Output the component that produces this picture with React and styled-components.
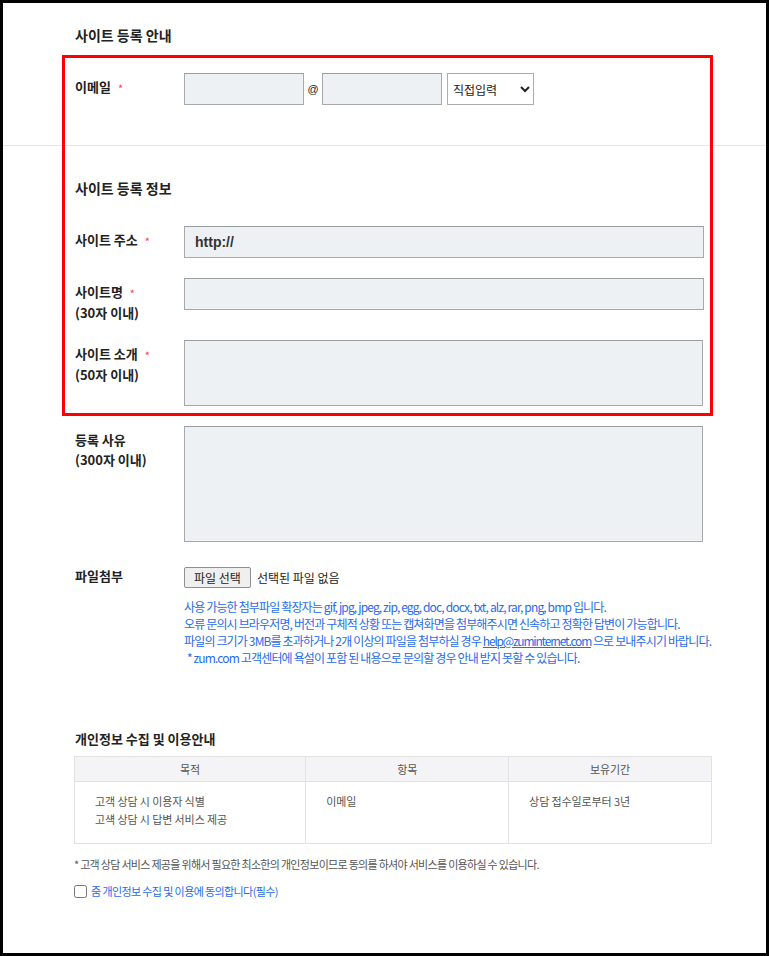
import styled, { createGlobalStyle } from "styled-components";

const GlobalStyle = createGlobalStyle`
  html, body {
    margin: 0;
    padding: 0;
    background: #fff;
  }
  body {
    font-family: "Noto Sans CJK KR", "Noto Sans", sans-serif;
    color: #222;
  }
  * {
    box-sizing: border-box;
  }
`;

const notes = [
    "사용 가능한 첨부파일 확장자는 gif, jpg, jpeg, zip, egg, doc, docx, txt, alz, rar, png, bmp 입니다.",
    "오류 문의시 브라우저명, 버전과 구체적 상황 또는 캡쳐화면을 첨부해주시면 신속하고 정확한 답변이 가능합니다.",
];

const App = () => {
    return (
        <>
            <GlobalStyle />
            <Frame>
                <GuideSection>
                    <Heading>사이트 등록 안내</Heading>
                    <FormRow>
                        <Label>
                            이메일<Required>*</Required>
                        </Label>
                        <Field>
                            <Input $width={120} type="text" />
                            <At>@</At>
                            <Input $width={120} type="text" />
                            <Select defaultValue="direct">
                                <option value="direct">직접입력</option>
                                <option value="naver">naver.com</option>
                            </Select>
                        </Field>
                    </FormRow>
                </GuideSection>

                <InfoSection>
                    <Heading>사이트 등록 정보</Heading>
                    <FormRow>
                        <Label>
                            사이트 주소<Required>*</Required>
                        </Label>
                        <Input type="text" defaultValue="http://" $bold />
                    </FormRow>
                    <FormRow>
                        <Label>
                            사이트명<Required>*</Required>
                            <br />
                            (30자 이내)
                        </Label>
                        <Input type="text" />
                    </FormRow>
                    <FormRow>
                        <Label>
                            사이트 소개<Required>*</Required>
                            <br />
                            (50자 이내)
                        </Label>
                        <TextArea $height={66} />
                    </FormRow>
                    <FormRow>
                        <Label>
                            등록 사유
                            <br />
                            (300자 이내)
                        </Label>
                        <TextArea $height={116} />
                    </FormRow>
                    <FormRow>
                        <Label>파일첨부</Label>
                        <FileBox>
                            <FilePicker>
                                <FileButton type="button">파일 선택</FileButton>
                                <FileName>선택된 파일 없음</FileName>
                            </FilePicker>
                            <Notes>
                                {notes.map((n) => (
                                    <li key={n}>{n}</li>
                                ))}
                                <li>
                                    파일의 크기가 3MB를 초과하거나 2개 이상의 파일을 첨부하실 경우{" "}
                                    <a href="#mail">help@zuminternet.com</a> 으로 보내주시기 바랍니다.
                                </li>
                                <li className="star">
                                    * zum.com 고객센터에 욕설이 포함 된 내용으로 문의할 경우 안내 받지 못할 수 있습니다.
                                </li>
                            </Notes>
                        </FileBox>
                    </FormRow>
                </InfoSection>

                <PrivacySection>
                    <PrivacyTitle>개인정보 수집 및 이용안내</PrivacyTitle>
                    <PrivacyTable>
                        <thead>
                            <tr>
                                <th style={{ width: "36.3%" }}>목적</th>
                                <th>항목</th>
                                <th>보유기간</th>
                            </tr>
                        </thead>
                        <tbody>
                            <tr>
                                <td>
                                    고객 상담 시 이용자 식별
                                    <br />
                                    고섁 상담 시 답변 서비스 제공
                                </td>
                                <td>이메일</td>
                                <td>상담 접수일로부터 3년</td>
                            </tr>
                        </tbody>
                    </PrivacyTable>
                    <FootNote>
                        * 고객 상담 서비스 제공을 위해서 필요한 최소한의 개인정보이므로 동의를 하셔야 서비스를 이용하실 수 있습니다.
                    </FootNote>
                    <Agree>
                        <input type="checkbox" />
                        <span>줌 개인정보 수집 및 이용에 동의합니다(필수)</span>
                    </Agree>
                </PrivacySection>

                <Highlight />
            </Frame>
        </>
    );
};

const Frame = styled.div`
    position: relative;
    height: 100vh;
    border: 3px solid #000;
    overflow: hidden;
`;

/* red annotation box drawn over the form */
const Highlight = styled.div`
    position: absolute;
    top: 52px;
    left: 59px;
    width: 651px;
    height: 361px;
    border: 3px solid #ff0000;
    pointer-events: none;
`;

const GuideSection = styled.section`
    padding: 22px 50px 40px 72px;
    border-bottom: 1px solid #e5e5e5;
`;

const InfoSection = styled.section`
    padding: 32px 50px 0 72px;
`;

const Heading = styled.h2`
    margin: 0 0 28px;
    font-size: 14px;
    font-weight: 700;
    line-height: 20px;
    color: #222;
`;

const FormRow = styled.div`
    display: flex;
    align-items: flex-start;

    & + & {
        margin-top: 20px;
    }
`;

const Label = styled.div`
    width: 109px;
    flex-shrink: 0;
    padding-top: 4px;
    margin-bottom: -3px;
    font-size: 13px;
    font-weight: 700;
    line-height: 20px;
    color: #222;
`;

const Required = styled.span`
    margin-left: 7px;
    font-size: 11px;
    font-weight: 400;
    vertical-align: -1px;
    color: #ff3a52;
`;

const Field = styled.div`
    display: flex;
    align-items: center;
`;

const Input = styled.input`
    width: ${(p) => (p.$width ? `${p.$width}px` : "520px")};
    flex-shrink: 0;
    height: 32px;
    margin: 0;
    padding: 0 10px;
    border: 1px solid #a6a9ad;
    border-top-color: #9a9da1;
    background: #eef1f4;
    border-radius: 0;
    font-family: "Liberation Sans", Arial, sans-serif;
    font-size: 14px;
    font-weight: ${(p) => (p.$bold ? 700 : 400)};
    color: #333;
    outline: none;
`;

const TextArea = styled.textarea`
    display: block;
    flex-shrink: 0;
    width: 519px;
    height: ${(p) => p.$height}px;
    margin: 0;
    padding: 8px 10px;
    border: 1px solid #a6a9ad;
    border-top-color: #9a9da1;
    background: #eef1f4;
    border-radius: 0;
    resize: none;
    outline: none;
`;

const At = styled.span`
    width: 18px;
    text-align: center;
    font-family: "Liberation Sans", Arial, sans-serif;
    font-size: 11px;
    color: #222;
`;

const Select = styled.select`
    width: 87px;
    height: 32px;
    margin: 0 0 0 5px;
    padding: 0 1px;
    border: 1px solid #aaacb0;
    border-radius: 0;
    background: #fff;
    font-family: "Noto Sans CJK KR", sans-serif;
    font-size: 12px;
    color: #222;
`;

const FileBox = styled.div`
    display: flex;
    flex-direction: column;
    padding-top: 5px;
`;

const FilePicker = styled.div`
    display: flex;
    align-items: center;
    gap: 6px;
`;

const FileButton = styled.button`
    width: 67px;
    height: 21px;
    padding: 0;
    border: 1px solid #8f8f8f;
    border-radius: 2px;
    background: #efefef;
    font-family: "Noto Sans CJK KR", sans-serif;
    font-size: 12px;
    line-height: 19px;
    color: #222;
`;

const FileName = styled.span`
    font-size: 12px;
    color: #222;
`;

const Notes = styled.ul`
    margin: 10px 0 0;
    padding: 0;
    list-style: none;
    font-size: 12px;
    line-height: 17px;
    letter-spacing: -0.85px;
    color: #1f6bea;
    white-space: nowrap;

    a {
        color: inherit;
        text-decoration: underline;
        letter-spacing: -1.2px;
    }
    .star {
        padding-left: 3px;
    }
`;

const PrivacySection = styled.section`
    padding: 63px 55px 0 71px;
`;

const PrivacyTitle = styled.h3`
    margin: 0 0 7px 1px;
    font-size: 13px;
    font-weight: 700;
    line-height: 20px;
    color: #222;
`;

const PrivacyTable = styled.table`
    width: 638px;
    border-collapse: collapse;
    table-layout: fixed;
    font-size: 11px;
    letter-spacing: -0.1px;
    color: #555;

    th {
        height: 25px;
        padding: 0;
        border: 1px solid #e2e2e2;
        background: #f4f4f6;
        font-weight: 400;
        text-align: center;
    }
    td {
        height: 62px;
        padding: 10px 20px 14px;
        border: 1px solid #e2e2e2;
        line-height: 18px;
        vertical-align: top;
        text-align: left;
    }
`;

const FootNote = styled.p`
    margin: 11px 0 0;
    font-size: 11px;
    line-height: 18px;
    letter-spacing: -0.7px;
    color: #555;
    white-space: nowrap;
`;

const Agree = styled.label`
    display: flex;
    align-items: center;
    gap: 4px;
    margin-top: 9px;
    font-size: 11px;
    line-height: 18px;
    letter-spacing: -0.6px;
    color: #1f6bea;

    input {
        width: 13px;
        height: 13px;
        margin: 0;
    }
`;

export default App;
